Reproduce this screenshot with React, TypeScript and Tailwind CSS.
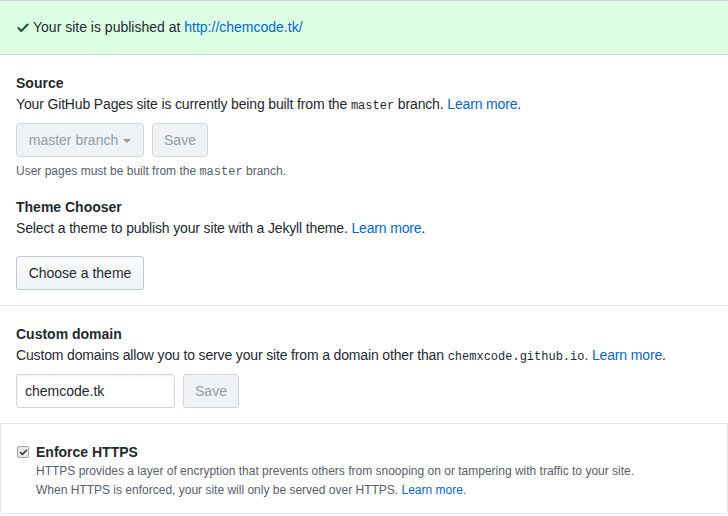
import { Check } from "lucide-react"

function Desc({ children }: { children: React.ReactNode }) {
  return <p className="text-[14px] leading-[21px] text-[#24292e] tracking-[-0.15px]">{children}</p>
}

function Mono({ children }: { children: React.ReactNode }) {
  return <code className="font-['Liberation_Mono',monospace] text-[12px] tracking-normal">{children}</code>
}

function LearnMore() {
  return <a className="text-[#0366d6]">Learn more</a>
}

export default function App() {
  return (
    <div className="w-[728px] h-[516px] bg-white text-[#24292e] font-['Liberation_Sans',Arial,sans-serif]">
      <div className="border-t border-[#d1d5da] bg-[#dcffe4] border-b border-b-[#bfe5c7] h-[55px] flex items-center px-4 text-[14px]">
        <Check size={14} strokeWidth={3.5} className="text-[#165c26] mr-[3px] mt-[1px]" />
        <span>Your site is published at <a className="text-[#0366d6]">http://chemcode.tk/</a></span>
      </div>

      <div className="px-4 pt-[18px]">
        <h3 className="text-[14px] font-semibold leading-[21px]">Source</h3>
        <Desc>Your GitHub Pages site is currently being built from the <Mono>master</Mono> branch. <LearnMore />.</Desc>
        <div className="flex gap-2 mt-[6px]">
          <button className="h-[34px] w-[128px] rounded-[3px] border border-[#d1d5da] bg-[#eff3f6] text-[#959da5] text-[14px] flex items-center justify-center gap-[5px]">
            master branch
            <span className="border-x-[4px] border-x-transparent border-t-[4px] border-t-[#959da5] mt-[1px]" />
          </button>
          <button className="h-[34px] w-[56px] rounded-[3px] border border-[#d1d5da] bg-[#eff3f6] text-[#959da5] text-[14px]">Save</button>
        </div>
        <p className="text-[12px] text-[#586069] mt-[5px] leading-[18px]">User pages must be built from the <Mono>master</Mono> branch.</p>

        <h3 className="text-[14px] font-semibold leading-[21px] mt-[16px]">Theme Chooser</h3>
        <Desc>Select a theme to publish your site with a Jekyll theme. <LearnMore />.</Desc>
        <button className="mt-[17px] h-[34px] w-[128px] rounded-[3px] border border-[#c5c9cd] bg-gradient-to-b from-[#fafbfc] to-[#eff3f6] text-[14px] text-[#24292e]">Choose a theme</button>
      </div>

      <div className="border-t border-[#e1e4e8] mt-[15px] px-4 pt-[18px]">
        <h3 className="text-[14px] font-semibold leading-[21px]">Custom domain</h3>
        <Desc>Custom domains allow you to serve your site from a domain other than <Mono>chemxcode.github.io</Mono>. <LearnMore />.</Desc>
        <div className="flex gap-2 mt-[6px]">
          <input
            defaultValue="chemcode.tk"
            className="h-[34px] w-[159px] rounded-[3px] border border-[#d1d5da] px-2 text-[14px] text-[#24292e] outline-none shadow-[inset_0_1px_2px_rgba(27,31,35,0.075)]"
          />
          <button className="h-[34px] w-[56px] rounded-[3px] border border-[#d1d5da] bg-[#eff3f6] text-[#959da5] text-[14px]">Save</button>
        </div>
      </div>

      <div className="mt-[15px] h-[91px] border border-[#e1e4e8] rounded-b-[3px] px-4 pt-[19px]">
        <label className="flex items-center gap-[7px]">
          <span className="w-[12px] h-[12px] rounded-[2px] border border-[#a6a6a6] bg-[#e8e8e8] flex items-center justify-center">
            <Check size={9} strokeWidth={4} className="text-[#333]" />
          </span>
          <span className="text-[14px] font-semibold leading-[18px]">Enforce HTTPS</span>
        </label>
        <div className="pl-[19px] text-[12px] text-[#586069] leading-[19px] mt-[1px]">
          <p>HTTPS provides a layer of encryption that prevents others from snooping on or tampering with traffic to your site.</p>
          <p>When HTTPS is enforced, your site will only be served over HTTPS. <a className="text-[#0366d6]">Learn more</a>.</p>
        </div>
      </div>
    </div>
  )
}
